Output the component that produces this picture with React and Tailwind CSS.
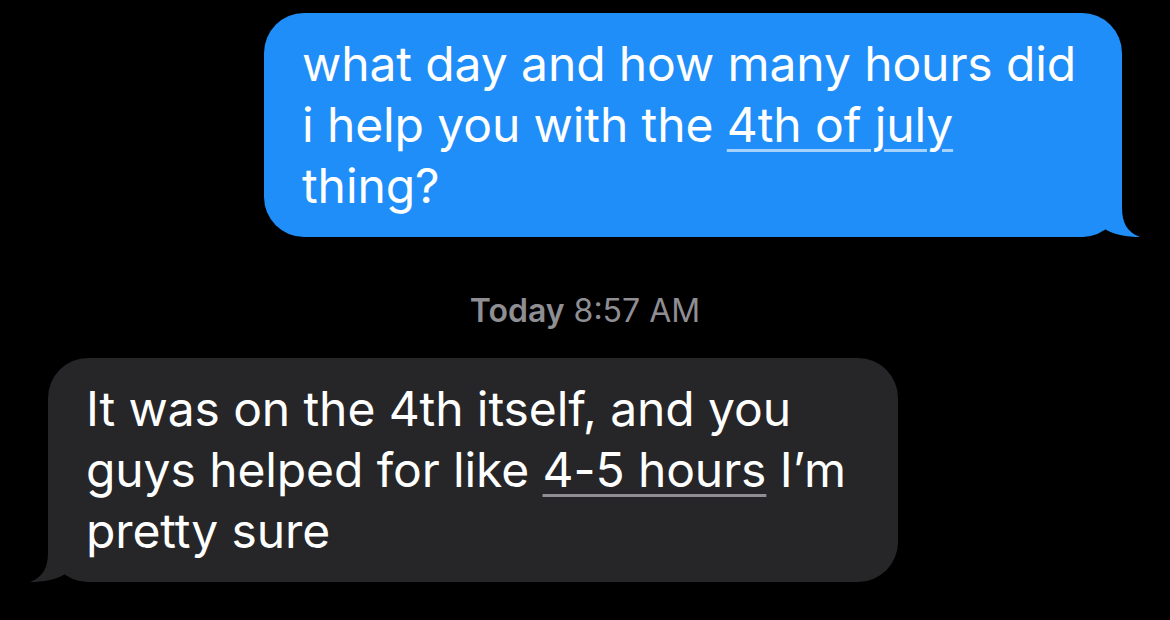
export default function App() {
  return (
    <div
      className="w-[1170px] h-[620px] bg-black overflow-hidden flex flex-col"
      style={{ fontFamily: "Inter, 'Noto Sans', sans-serif" }}
    >
      {/* Sent */}
      <div className="flex justify-end pr-[48px] pt-[13px]">
        <div className="relative w-[858px] h-[224px] rounded-[40px] bg-[#1f8ef9] pl-[38px] pt-[20px] text-white text-[48px] leading-[61px] tracking-[-0.1px]">
          what day and how many hours did
          <br />
          i help you with the{" "}
          <span className="underline decoration-[3px] underline-offset-[7px] decoration-white/60">
            4th of july
          </span>
          <br />
          thing?
          <svg
            className="absolute right-[-18px] bottom-0"
            width="58"
            height="48"
            viewBox="0 0 58 48"
          >
            <path
              d="M0 0 L40 0 L40 18 C40 34 45 43 58 48 C46 48 30 46 20 38 C14 43 7 47 0 48 Z"
              fill="#1f8ef9"
            />
          </svg>
        </div>
      </div>

      {/* Timestamp */}
      <div className="mt-[56px] mb-[29px] text-center text-[32px] leading-[36px] text-[#8e8e93]">
        <span className="font-semibold">Today</span> 8:57 AM
      </div>

      {/* Received */}
      <div className="flex justify-start pl-[48px]">
        <div className="relative w-[850px] h-[224px] rounded-[40px] bg-[#262628] pl-[38px] pt-[20px] text-white text-[48px] leading-[61px] tracking-[-0.1px]">
          It was on the 4th itself, and you
          <br />
          guys helped for like{" "}
          <span className="underline decoration-[3px] underline-offset-[7px] decoration-[#8e8e93]">
            4-5 hours
          </span>{" "}
          I’m
          <br />
          pretty sure
          <svg
            className="absolute left-[-18px] bottom-0"
            width="58"
            height="48"
            viewBox="0 0 58 48"
          >
            <path
              d="M58 0 L18 0 L18 18 C18 34 13 43 0 48 C12 48 28 46 38 38 C44 43 51 47 58 48 Z"
              fill="#262628"
            />
          </svg>
        </div>
      </div>
    </div>
  );
}
